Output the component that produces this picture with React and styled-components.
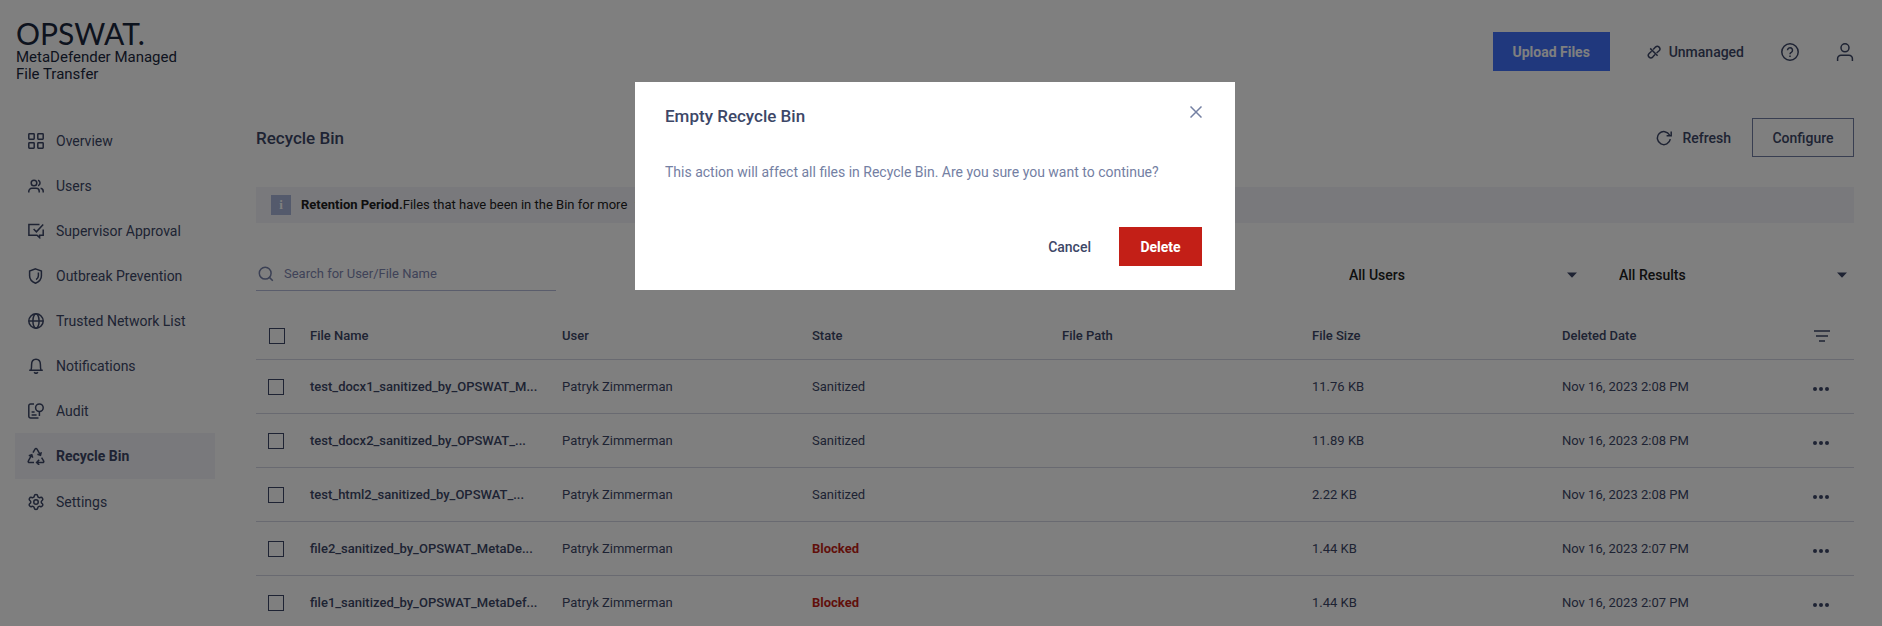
import { useState } from "react";
import styled, { createGlobalStyle } from "styled-components";
import { Settings } from "lucide-react";

const navItems = [
  { name: "Overview", icon: <OverviewIcon /> },
  { name: "Users", icon: <UsersIcon /> },
  { name: "Supervisor Approval", icon: <ApprovalIcon /> },
  { name: "Outbreak Prevention", icon: <ShieldIcon /> },
  { name: "Trusted Network List", icon: <GlobeIcon /> },
  { name: "Notifications", icon: <BellIcon /> },
  { name: "Audit", icon: <AuditIcon /> },
  { name: "Recycle Bin", icon: <RecycleIcon />, active: true },
  { name: "Settings", icon: <Settings size={18} /> },
];

const files = [
  {
    id: 1,
    name: "test_docx1_sanitized_by_OPSWAT_M...",
    state: "Sanitized",
    size: "11.76 KB",
    date: "Nov 16, 2023 2:08 PM",
  },
  {
    id: 2,
    name: "test_docx2_sanitized_by_OPSWAT_...",
    state: "Sanitized",
    size: "11.89 KB",
    date: "Nov 16, 2023 2:08 PM",
  },
  {
    id: 3,
    name: "test_html2_sanitized_by_OPSWAT_...",
    state: "Sanitized",
    size: "2.22 KB",
    date: "Nov 16, 2023 2:08 PM",
  },
  {
    id: 4,
    name: "file2_sanitized_by_OPSWAT_MetaDe...",
    state: "Blocked",
    size: "1.44 KB",
    date: "Nov 16, 2023 2:07 PM",
  },
  {
    id: 5,
    name: "file1_sanitized_by_OPSWAT_MetaDef...",
    state: "Blocked",
    size: "1.44 KB",
    date: "Nov 16, 2023 2:07 PM",
  },
];

export default function App() {
  const [showDialog, setShowDialog] = useState(true);

  return (
    <>
      <GlobalStyle />
      <Header />
      <Body>
        <Sidebar />
        <Main>
          <TitleRow>
            <h1>Recycle Bin</h1>
            <RefreshButton>
              <RefreshIcon />
              Refresh
            </RefreshButton>
            <OutlineButton onClick={() => setShowDialog(true)}>
              Configure
            </OutlineButton>
          </TitleRow>
          <Banner>
            <InfoBadge>i</InfoBadge>
            <p>
              <b>Retention Period.</b>Files that have been in the Bin for more
              <Period>than 30 days will be deleted.</Period>
            </p>
          </Banner>
          <Filters>
            <SearchField>
              <SearchIcon />
              <input
                type="search"
                aria-label="Search"
                placeholder="Search for User/File Name"
              />
            </SearchField>
            <FilterSelect label="All Users" />
            <FilterSelect label="All Results" />
          </Filters>
          <FileTable />
        </Main>
      </Body>
      {showDialog && <EmptyBinDialog onClose={() => setShowDialog(false)} />}
    </>
  );
}

function Header() {
  return (
    <StyledHeader>
      <Brand>
        <Logo>OPSWAT.</Logo>
        <Product>
          MetaDefender Managed
          <br />
          File Transfer
        </Product>
      </Brand>
      <HeaderActions>
        <PrimaryButton>Upload Files</PrimaryButton>
        <Status>
          <UnlinkIcon />
          Unmanaged
        </Status>
        <IconButton aria-label="Help">
          <HelpIcon />
        </IconButton>
        <IconButton aria-label="Account">
          <UserIcon />
        </IconButton>
      </HeaderActions>
    </StyledHeader>
  );
}

function Sidebar() {
  return (
    <StyledNav>
      <ul>
        {navItems.map(({ name, icon, active }) => (
          <li key={name}>
            <NavLink href="#" $active={active}>
              <NavIcon>{icon}</NavIcon>
              {name}
            </NavLink>
          </li>
        ))}
      </ul>
    </StyledNav>
  );
}

function FilterSelect({ label }) {
  return (
    <SelectField>
      <select aria-label={label}>
        <option>{label}</option>
      </select>
      <svg width="10" height="6" viewBox="0 0 10 6" aria-hidden="true">
        <path d="M0 0.4h10L5 5.8z" fill="currentColor" />
      </svg>
    </SelectField>
  );
}

function FileTable() {
  return (
    <Table>
      <colgroup>
        <CheckCol />
        <col />
        <col />
        <col />
        <col />
        <col />
        <col />
        <ActionCol />
      </colgroup>
      <thead>
        <tr>
          <CheckHead>
            <Checkbox type="checkbox" aria-label="Select all files" />
          </CheckHead>
          <NameHead>File Name</NameHead>
          <th>User</th>
          <th>State</th>
          <th>File Path</th>
          <th>File Size</th>
          <th>Deleted Date</th>
          <ActionHead>
            <IconButton aria-label="Filter columns">
              <FilterIcon />
            </IconButton>
          </ActionHead>
        </tr>
      </thead>
      <tbody>
        {files.map((file) => (
          <tr key={file.id}>
            <CheckCell>
              <Checkbox type="checkbox" aria-label={`Select ${file.name}`} />
            </CheckCell>
            <NameCell>{file.name}</NameCell>
            <td>Patryk Zimmerman</td>
            <StateCell $blocked={file.state === "Blocked"}>
              {file.state}
            </StateCell>
            <td />
            <td>{file.size}</td>
            <td>{file.date}</td>
            <ActionCell>
              <IconButton aria-label="More actions">
                <DotsIcon />
              </IconButton>
            </ActionCell>
          </tr>
        ))}
      </tbody>
    </Table>
  );
}

function EmptyBinDialog({ onClose }) {
  return (
    <Backdrop>
      <Dialog role="dialog" aria-modal="true" aria-labelledby="dialog-title">
        <DialogHeader>
          <h2 id="dialog-title">Empty Recycle Bin</h2>
          <CloseButton aria-label="Close" onClick={onClose}>
            <CloseIcon />
          </CloseButton>
        </DialogHeader>
        <p>
          This action will affect all files in Recycle Bin. Are you sure you
          want to continue?
        </p>
        <DialogActions>
          <TextButton onClick={onClose}>Cancel</TextButton>
          <DangerButton onClick={onClose}>Delete</DangerButton>
        </DialogActions>
      </Dialog>
    </Backdrop>
  );
}

function Icon({ size = 16, stroke = 1.5, children }) {
  return (
    <svg
      width={size}
      height={size}
      viewBox={`0 0 ${size} ${size}`}
      fill="none"
      stroke="currentColor"
      strokeWidth={stroke}
      aria-hidden="true"
    >
      {children}
    </svg>
  );
}

function OverviewIcon() {
  return (
    <Icon>
      <rect x="0.8" y="0.8" width="5.4" height="5.4" rx="0.6" />
      <rect x="9.8" y="0.8" width="5.4" height="5.4" rx="0.6" />
      <rect x="0.8" y="9.8" width="5.4" height="5.4" rx="0.6" />
      <rect x="9.8" y="9.8" width="5.4" height="5.4" rx="0.6" />
    </Icon>
  );
}

function UsersIcon() {
  return (
    <Icon>
      <circle cx="6" cy="5" r="2.8" />
      <path d="M0.8 14.5v-1.2a3 3 0 0 1 3-3h4.4a3 3 0 0 1 3 3v1.2M10 2.3a2.8 2.8 0 0 1 0 5.4M12.6 10.3a3 3 0 0 1 2.6 3v1.2" />
    </Icon>
  );
}

function ApprovalIcon() {
  return (
    <Icon>
      <path d="M11.5 1.6H0.9v10.6H9l2.6 2.4v-2.4h3.6V6.4M5.6 6l2.8 2.8 6.8-7.2" />
    </Icon>
  );
}

function ShieldIcon() {
  return (
    <Icon>
      <path d="M7.5 0.9 13.4 3v5c0 3.6-2.8 5.9-5.9 7.2C4.4 13.9 1.6 11.6 1.6 8V3z" />
      <path d="M10.4 4.6V7.8c0 1.9-0.9 3-2.3 3.9" />
    </Icon>
  );
}

function GlobeIcon() {
  return (
    <Icon>
      <circle cx="8" cy="8" r="7.2" />
      <ellipse cx="8" cy="8" rx="3.1" ry="7.2" />
      <path d="M0.8 8h14.4" />
    </Icon>
  );
}

function BellIcon() {
  return (
    <Icon>
      <path d="M1.2 12.2h13.6M3 12c.6-1.2.6-3 .6-5.4C3.6 3.6 5.2 1.2 8 1.2s4.4 2.4 4.4 5.4c0 2.4 0 4.2.6 5.4M6.2 14.2a2 2 0 0 0 3.6 0" />
    </Icon>
  );
}

function AuditIcon() {
  return (
    <Icon>
      <path d="M6 0.9H2.6A1.8 1.8 0 0 0 0.8 2.7v10.6a1.8 1.8 0 0 0 1.8 1.8H10.5M3.6 8.9h3M3.6 11.9h5M11.4 8.6V13" />
      <circle cx="11.4" cy="4.7" r="3.8" />
    </Icon>
  );
}

function RecycleIcon() {
  return (
    <Icon size={18}>
      <path d="M7 15.5H2.4c-1 0-1.5-.8-1-1.6L4.6 8.2M1.8 8.8l3-1 .9 3M6 5.6l2-3.4c.5-.8 1.5-.8 2 0l3.2 5.4M10.4 7.2l3.1 1 .8-3.1M14.6 10.6l2 3.3c.5.8 0 1.6-1 1.6H10M12.2 12.9l-2.6 2.6 2.6 2.5" />
    </Icon>
  );
}

function UnlinkIcon() {
  return (
    <Icon size={14}>
      <path d="M6.2 4.6l2.3-2.5a2.5 2.5 0 0 1 3.6 3.6L9.6 8M4.6 6.2L2.1 8.5a2.5 2.5 0 0 0 3.6 3.6L8 9.6M3.2 3.400l7.400 7.400" />
    </Icon>
  );
}

function HelpIcon() {
  return (
    <Icon size={18}>
      <circle cx="9" cy="9" r="8.2" />
      <path d="M6.5 7.2a2.5 2.5 0 1 1 3.8 2.1C9.4 9.8 9 10.2 9 11.2M9 12.6v1.5" />
    </Icon>
  );
}

function UserIcon() {
  return (
    <Icon size={18}>
      <circle cx="9" cy="4.8" r="4" />
      <path d="M1.6 18v-2.4a3.4 3.4 0 0 1 3.4-3.4h8a3.4 3.4 0 0 1 3.4 3.4V18" />
    </Icon>
  );
}

function RefreshIcon() {
  return (
    <Icon>
      <path d="M14.3 9.2A6.5 6.5 0 1 1 13.6 5M15.2 1.4v4.4h-4.6" />
    </Icon>
  );
}

function SearchIcon() {
  return (
    <Icon>
      <circle cx="7.2" cy="7.2" r="5.9" />
      <path d="M11.4 11.4l3.4 3.4" />
    </Icon>
  );
}

function FilterIcon() {
  return (
    <Icon>
      <path d="M0 3h16M2 8h12M5 13h6" />
    </Icon>
  );
}

function DotsIcon() {
  return (
    <svg width="18" height="6" viewBox="0 0 18 6" fill="currentColor" aria-hidden="true">
      <circle cx="3" cy="3" r="2" />
      <circle cx="9" cy="3" r="2" />
      <circle cx="15" cy="3" r="2" />
    </svg>
  );
}

function CloseIcon() {
  return (
    <Icon size={12}>
      <path d="M0.5 0.5l11 11M11.5 0.5l-11 11" />
    </Icon>
  );
}

const GlobalStyle = createGlobalStyle`
  * {
    box-sizing: border-box;
  }

  body {
    margin: 0;
    overflow: hidden;
    background: #ffffff;
    color: #3d4767;
    font: 14px/20px Roboto, "Liberation Sans", sans-serif;
  }

  h1, h2, p, ul {
    margin: 0;
    padding: 0;
  }

  h1, h2 {
    font-size: 17px;
    font-weight: 500;
  }

  button, input, select {
    font: inherit;
    color: inherit;
  }

  svg {
    display: block;
    flex: none;
  }
`;

const StyledHeader = styled.header`
  display: flex;
  justify-content: space-between;
  align-items: center;
  min-height: 103px;
  padding: 0 28px 0 16px;
`;

const Brand = styled.div`
  padding-bottom: 4px;
  color: #1b273c;
`;

const Logo = styled.div`
  font: 400 30px/32px Lato, sans-serif;
`;

const Product = styled.div`
  font-size: 15px;
  line-height: 17px;
`;

const HeaderActions = styled.div`
  display: flex;
  align-items: center;
  gap: 37px;
`;

const Status = styled.span`
  display: flex;
  align-items: center;
  gap: 8px;
  font-weight: 500;
`;

const BaseButton = styled.button`
  display: flex;
  align-items: center;
  justify-content: center;
  height: 39px;
  padding: 0 18px;
  border: none;
  background: none;
  font-weight: 500;
  cursor: pointer;
`;

const PrimaryButton = styled(BaseButton)`
  min-width: 117px;
  background: #4070fb;
  color: #ffffff;
  font-weight: 700;
`;

const OutlineButton = styled(BaseButton)`
  min-width: 102px;
  border: 1px solid #707ca3;
`;

const RefreshButton = styled(BaseButton)`
  gap: 10px;
  padding: 0 21px;
`;

const TextButton = styled(BaseButton)`
  padding: 0 28px;
`;

const DangerButton = styled(BaseButton)`
  min-width: 83px;
  background: #c31f17;
  color: #ffffff;
  font-weight: 700;
`;

const IconButton = styled.button`
  display: flex;
  padding: 0;
  border: none;
  background: none;
  cursor: pointer;
`;

const Body = styled.div`
  display: flex;
  gap: 41px;
  padding: 15px 28px 0 15px;
`;

const StyledNav = styled.nav`
  flex: 0 0 200px;

  ul {
    list-style: none;
  }
`;

const NavLink = styled.a`
  display: flex;
  align-items: center;
  gap: 10px;
  height: ${({ $active }) => ($active ? "46px" : "45px")};
  padding-left: 11px;
  background: ${({ $active }) => ($active ? "#f3f3f8" : "none")};
  color: inherit;
  font-weight: ${({ $active }) => ($active ? 700 : 400)};
  text-decoration: none;
`;

const NavIcon = styled.span`
  display: flex;
  justify-content: center;
  flex: 0 0 20px;
`;

const Main = styled.main`
  flex: 1;
  min-width: 0;
`;

const TitleRow = styled.div`
  display: flex;
  align-items: center;

  h1 {
    flex: 1;
  }
`;

const Banner = styled.div`
  display: flex;
  align-items: center;
  gap: 10px;
  height: 36px;
  margin-top: 30px;
  padding: 0 15px;
  background: #f3f3f8;
  color: #202020;
  font-size: 13px;
`;

const InfoBadge = styled.span`
  width: 20px;
  height: 20px;
  background: #a8b4d8;
  color: #ffffff;
  font: 700 13px/20px "Liberation Serif", serif;
  text-align: center;
`;

const Period = styled.span`
  padding-left: 8px;
`;

const Filters = styled.div`
  display: flex;
  align-items: center;
  gap: 42px;
  margin-top: 35px;
  padding-right: 7px;
`;

const SearchField = styled.label`
  display: flex;
  align-items: center;
  gap: 10px;
  width: 300px;
  height: 33px;
  margin-right: auto;
  padding-left: 2px;
  border-bottom: 1px solid #b4bad8;
  color: #7680a8;
  font-size: 13px;

  input {
    flex: 1;
    min-width: 0;
    padding: 0;
    border: none;
    background: none;
    outline: none;
  }

  input::placeholder {
    color: #7f86b0;
  }
`;

const SelectField = styled.label`
  display: flex;
  align-items: center;
  width: 228px;

  select {
    flex: 1;
    padding: 0;
    border: none;
    background: none;
    appearance: none;
    color: #202020;
    font-weight: 500;
  }
`;

const Table = styled.table`
  width: 100%;
  margin-top: 22px;
  border-collapse: collapse;
  table-layout: fixed;
  font-size: 13px;

  th,
  td {
    height: 54px;
    padding: 2px 2px 0;
    border-bottom: 1px solid #d2d4e2;
    text-align: left;
    white-space: nowrap;
  }

  th {
    height: 46px;
    padding-top: 0;
    font-weight: 500;
  }
`;

const CheckCol = styled.col`
  width: 54px;
`;

const ActionCol = styled.col`
  width: 44px;
`;

const CheckHead = styled.th`
  && {
    padding-left: 13px;
  }
`;

const CheckCell = styled.td`
  && {
    padding-left: 12px;
  }
`;

const Checkbox = styled.input`
  display: block;
  width: 16px;
  height: 16px;
  margin: 0;
  border: 1px solid #3d4767;
  appearance: none;
`;

const NameHead = styled.th`
  && {
    padding-left: 0;
  }
`;

const NameCell = styled.td`
  font-weight: 500;

  && {
    padding-left: 0;
  }
`;

const StateCell = styled.td`
  color: ${({ $blocked }) => ($blocked ? "#c31f17" : "inherit")};
  font-weight: ${({ $blocked }) => ($blocked ? 700 : 400)};
`;

const ActionHead = styled.th`
  && {
    padding-left: 4px;
  }
`;

const ActionCell = styled.td`
  && {
    padding-top: 6px;
  }
`;

const Backdrop = styled.div`
  position: fixed;
  inset: 0;
  display: flex;
  justify-content: center;
  align-items: flex-start;
  padding: 82px 12px 0 0;
  background: rgba(0, 0, 0, 0.5);
`;

const Dialog = styled.section`
  width: 600px;
  padding: 24px 33px 24px 30px;
  background: #ffffff;

  p {
    margin-top: 36px;
    color: #7480a3;
  }
`;

const DialogHeader = styled.div`
  display: flex;
  justify-content: space-between;
  align-items: flex-start;
`;

const CloseButton = styled(IconButton)`
  color: #7480a3;
`;

const DialogActions = styled.div`
  display: flex;
  justify-content: flex-end;
  margin-top: 45px;
`;
